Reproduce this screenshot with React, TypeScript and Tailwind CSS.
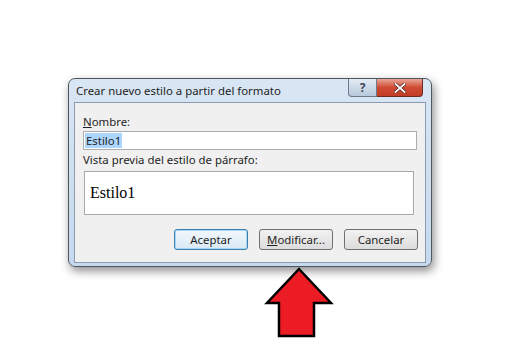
export default function App() {
  const ui = { fontFamily: '"Noto Sans", "Open Sans", sans-serif' };

  return (
    <div className="h-[347px] w-[509px] overflow-hidden bg-white" style={ui}>
      <div className="ml-[68px] pt-[78px]">
        <div className="flex h-[189px] w-[364px] flex-col rounded-[7px] border border-[#50565e] bg-gradient-to-b from-[#d9e6f4] via-[#cfdff0] to-[#c6d9ee] shadow-[2px_4px_10px_rgba(0,0,0,0.45)]">
          <div className="flex h-[23px] items-start justify-between">
            <span className="pl-[7px] pt-[4px] text-[11.4px] leading-[16px] text-[#1e1e1e]">
              Crear nuevo estilo a partir del formato
            </span>
            <div className="mr-[8px] flex">
              <div className="flex h-[18px] w-[29px] items-center justify-center rounded-bl-[4px] border border-t-0 border-[#6d7a8a] bg-gradient-to-b from-[#e4ecf5] to-[#b7c8db] text-[12px] font-bold text-[#3f4b5a]">
                ?
              </div>
              <div className="flex h-[18px] w-[46px] items-center justify-center rounded-br-[4px] border border-l-0 border-t-0 border-[#6b2a22] bg-gradient-to-b from-[#e8a596] via-[#cf4a33] to-[#c23b26]">
                <svg width="12" height="10" viewBox="0 0 12 10">
                  <path d="M1.5 1 L10.5 9 M10.5 1 L1.5 9" stroke="#4a1e18" strokeWidth="3.2" strokeLinecap="square" />
                  <path d="M1.5 1 L10.5 9 M10.5 1 L1.5 9" stroke="#ffffff" strokeWidth="1.8" strokeLinecap="square" />
                </svg>
              </div>
            </div>
          </div>
          <div className="mx-[5px] flex h-[161px] flex-col border border-[#8a9bb1] bg-[#f0f0f0] pl-[8px] pr-[6px] pt-[12px] text-[11.4px] text-[#1e1e1e]">
            <span className="leading-[14px]">
              <span className="underline">N</span>ombre:
            </span>
            <div className="mt-[2px] flex h-[19px] w-[334px] items-center border border-[#abadb3] bg-white px-[1px]">
              <span className="bg-[#3399ff]/40 px-[1px] leading-[15px] text-[#1e1e1e]">Estilo1</span>
            </div>
            <span className="mt-[2px] leading-[16px]">Vista previa del estilo de párrafo:</span>
            <div className="mt-[3px] ml-[1px] flex h-[44px] w-[330px] items-center border border-[#a8a8a8] bg-white pl-[5px]">
              <span className="text-[16px] text-black" style={{ fontFamily: '"Liberation Serif", serif' }}>
                Estilo1
              </span>
            </div>
            <div className="mt-[14px] flex justify-end gap-[11px] pr-[1px]">
              <button className="h-[21px] w-[74px] rounded-[3px] border border-[#3c7fb1] bg-gradient-to-b from-[#f2f8fc] to-[#d9e9f5] text-[11.4px] text-[#1e1e1e] shadow-[0_0_0_1px_#a9d6f2_inset]">
                Aceptar
              </button>
              <button className="h-[21px] w-[74px] rounded-[3px] border border-[#707070] bg-gradient-to-b from-[#f2f2f2] to-[#dcdcdc] text-[11.4px] text-[#1e1e1e]">
                <span className="underline">M</span>odificar...
              </button>
              <button className="h-[21px] w-[74px] rounded-[3px] border border-[#707070] bg-gradient-to-b from-[#f2f2f2] to-[#dcdcdc] text-[11.4px] text-[#1e1e1e]">
                Cancelar
              </button>
            </div>
          </div>
        </div>
        <div className="ml-[196px]">
          <svg width="70" height="72" viewBox="0 0 70 72">
            <path
              d="M35 2 L67 36 L50 36 L50 69 L15 69 L15 36 L3 36 Z"
              fill="#ec1c24"
              stroke="#000000"
              strokeWidth="2.5"
              strokeLinejoin="miter"
            />
          </svg>
        </div>
      </div>
    </div>
  );
}
